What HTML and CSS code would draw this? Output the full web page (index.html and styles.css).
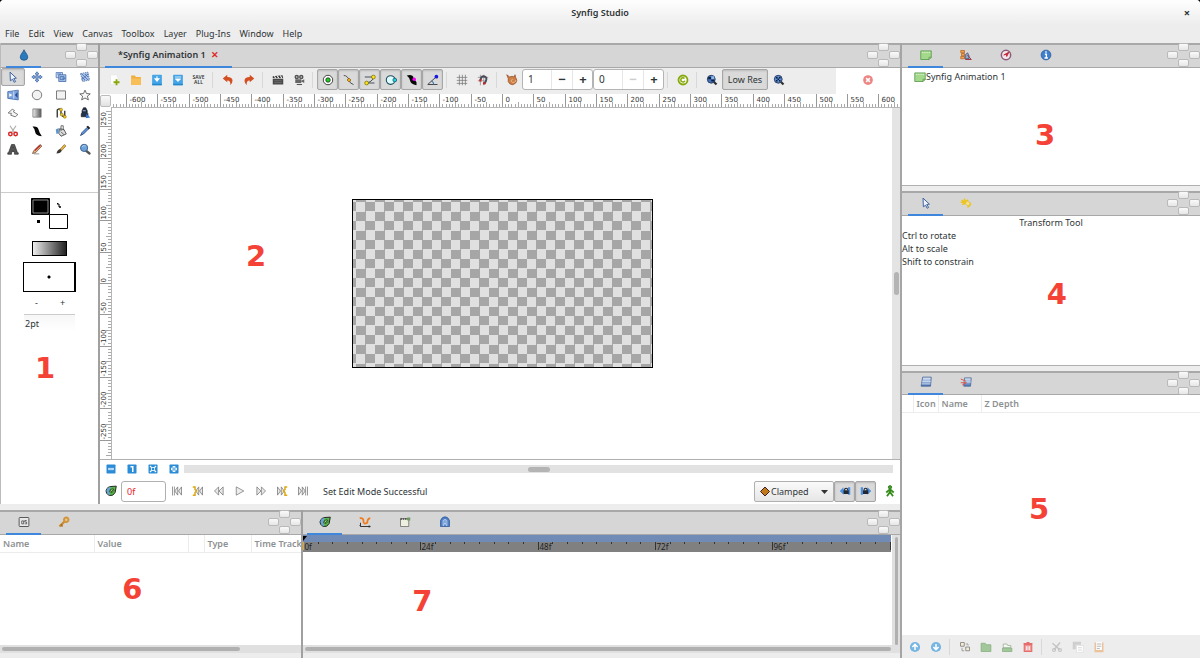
FILE: index.html
```html
<!DOCTYPE html>
<html lang="en">
<head>
<meta charset="utf-8">
<title>Synfig Studio</title>
<link rel="stylesheet" href="styles.css">
</head>
<body>
<svg class="sprite" aria-hidden="true">
  <defs>
    <linearGradient id="lg-fade"><stop offset="0" stop-color="#eee"/><stop offset="1" stop-color="#555"/></linearGradient>
    <linearGradient id="lg-layer" x2="0" y2="1"><stop offset="0" stop-color="#dfeafa"/><stop offset="1" stop-color="#4a74b4"/></linearGradient>
  </defs>
  <symbol id="drop" viewBox="0 0 16 16"><path d="M8 1C9 4 13 7 13 11Q13 15 8 15Q3 15 3 11C3 7 7 4 8 1Z" fill="#2a7ac0" stroke="#1d4f80"/></symbol>
  <symbol id="arrow" viewBox="0 0 16 16"><path d="M4 1.500L12.500 9.500L9 10L11.500 14L9.500 15L7.500 11L4.500 13Z" fill="#eef3fb" stroke="#3b5f9e" stroke-width="1.300"/></symbol>
  <symbol id="move" viewBox="0 0 16 16"><path d="M8 1L10.500 4H9V7H12V5.500L15 8L12 10.500V9H9V12H10.500L8 15L5.500 12H7V9H4V10.500L1 8L4 5.500V7H7V4H5.500Z" fill="#8fb0e0" stroke="#3b65a8"/></symbol>
  <symbol id="scale" viewBox="0 0 16 16"><path d="M1.500 2H10V9H1.500Z" fill="#c3d4f0" stroke="#4b73b5"/><path d="M5 5H14.500V14H5Z" fill="#a9c1e8" stroke="#3b65a8"/><path d="M3 4H8M7 7.500H12V11.500H7ZM9 9.500H14" stroke="#3b65a8" fill="none"/></symbol>
  <symbol id="rotate" viewBox="0 0 16 16"><path d="M2 3.500L12 1.500L14 12L5 14Z" fill="#a9c1e8" stroke="#44699f" stroke-dasharray="2 1"/><path d="M4 4L12 12M4 8L8 12M8 4L12 8M3 12L12 4" stroke="#3b65a8"/></symbol>
  <symbol id="mirror" viewBox="0 0 16 16"><path d="M1 3.500L15 1.500V14.500L1 12.500Z" fill="#7fa3dc" stroke="#3b65a8"/><path d="M9 3V13" stroke="#dfe9f8"/><path d="M3 5.500L7 8L3 10.500Z" fill="#fff"/><path d="M14 4L10.500 8L14 12Z" fill="#244e92"/></symbol>
  <symbol id="circle" viewBox="0 0 16 16"><circle cx="8" cy="8" r="6.300" fill="#f2f2f2" stroke="#555"/></symbol>
  <symbol id="rect" viewBox="0 0 16 16"><path d="M2 2.500H14V13.500H2Z" fill="#f2f2f2" stroke="#555"/></symbol>
  <symbol id="star" viewBox="0 0 16 16"><path d="M8 1.500L10 6L15 6.500L11.200 9.500L12.500 14.500L8 12L3.500 14.500L4.800 9.500L1 6.500L6 6Z" fill="#f6f6f6" stroke="#444"/></symbol>
  <symbol id="poly" viewBox="0 0 16 16"><path d="M1.500 8L7 3L10 4.500L8.500 6.500L14.500 10L11 13L5 11L6 8.500Z" fill="#f6f6f6" stroke="#555"/></symbol>
  <symbol id="grad" viewBox="0 0 16 16"><path d="M2.500 2.500H13.500V13.500H2.500Z" fill="url(#lg-fade)" stroke="#777"/></symbol>
  <symbol id="spline" viewBox="0 0 16 16"><path d="M3 14V4Q6 1 8 4V9Q10 14 13 12V5" fill="none" stroke="#333" stroke-width="1.800"/><g fill="#f2c81e" stroke="#7a6410" stroke-width=".7"><circle cx="8" cy="3.500" r="2"/><circle cx="9" cy="10" r="2"/><circle cx="13" cy="13" r="2"/></g></symbol>
  <symbol id="fill" viewBox="0 0 16 16"><path d="M4 5L6 1H9L11 5V8L12 9V13H3V9L4 8Z" fill="#23314d" stroke="#111" stroke-width=".8"/><path d="M10 9L15 14L9 15Z" fill="#3c77c8"/><path d="M5 5H9" stroke="#cfd8ea"/></symbol>
  <symbol id="cutout" viewBox="0 0 16 16"><path d="M4 1L10 10M12 1L6 10" stroke="#aaa" stroke-width="1.500"/><g fill="none" stroke="#d92626" stroke-width="2"><circle cx="4.500" cy="12" r="2.300"/><circle cx="11.500" cy="12" r="2.300"/></g></symbol>
  <symbol id="width" viewBox="0 0 16 16"><path d="M2 2Q9 1 10 6Q11 10 14 14V15Q6 14 5.500 9Q5 5 2 2Z" fill="#080808"/></symbol>
  <symbol id="bucket" viewBox="0 0 16 16"><path d="M6 5L12 6L15 12L8 15L5 11Z" fill="#ddd" stroke="#333"/><path d="M8 8V1H11V7M8 9L12 13" stroke="#444" fill="none"/><path d="M1 6L5 4L5 11L2 12Z" fill="#5c93c8"/></symbol>
  <symbol id="dropper" viewBox="0 0 16 16"><path d="M2 14L4 10L11 3L13 5L6 12Z" fill="#5d94e0" stroke="#203a6c"/><path d="M10 2L12 1L15 4L13 6Z" fill="#222"/></symbol>
  <symbol id="lettera" viewBox="0 0 16 16"><path d="M6 2H10L14 13H15V15H10V13L9.500 11.500H6.500L6 13V15H1V13H2ZM7 9H9L8 5.500Z" fill="#555" stroke="#222" stroke-width=".8" fill-rule="evenodd"/></symbol>
  <symbol id="pencil" viewBox="0 0 16 16"><path d="M2 14L3.500 10.500L12 2L14.500 4L6 13Z" fill="#e3b27a" stroke="#4d2e1d" stroke-width=".8"/><path d="M5 10L12.500 3" stroke="#b22" stroke-width="1.500"/><path d="M4 14.500H11" stroke="#777"/></symbol>
  <symbol id="brush" viewBox="0 0 16 16"><path d="M7 8L12.500 2L14.500 4L9 10Z" fill="#e7b340" stroke="#7a5a17" stroke-width=".8"/><path d="M2 14Q3 9 7 8L9 10Q8 14 2 14Z" fill="#3d3833"/></symbol>
  <symbol id="zoom" viewBox="0 0 16 16"><path d="M9 10L14 14" stroke="#555" stroke-width="3" stroke-linecap="round"/><circle cx="6.800" cy="6.500" r="4.800" fill="#6ba3dd" stroke="#40618b" stroke-width="1.300"/><path d="M4 5Q6 2.500 9 4" stroke="#cfe4fa" fill="none"/></symbol>
  <symbol id="new" viewBox="0 0 16 16"><path d="M2 1H10L12 4V14H2Z" fill="#fdfdfd" stroke="#e6e6e6"/><path d="M10 7V15M6 11H14" stroke="#86a80a" stroke-width="2.400"/></symbol>
  <symbol id="open" viewBox="0 0 16 16"><path d="M1.500 2H6.500L8 4H14.500V14.500H1.500Z" fill="#f0ae3a"/><path d="M1.500 6H14.500V14.500H1.500Z" fill="#f8bf58"/></symbol>
  <symbol id="save" viewBox="0 0 16 16"><rect x="1.500" y="1" width="13" height="14" rx="1" fill="#45a5e6"/><path d="M8 3V8M5.500 6.500L8 9.500L10.500 6.500Z" fill="#fff" stroke="#fff" stroke-width="1.500"/><path d="M1.500 14H14.500" stroke="#2587cc" stroke-width="2"/></symbol>
  <symbol id="saveas" viewBox="0 0 16 16"><rect x="1.500" y="1" width="13" height="14" rx="1" fill="#45a5e6"/><path d="M4 4H12M4.500 6.500H11.500L8 10Z" fill="#fff" stroke="#fff"/><path d="M1.500 14H14.500" stroke="#2587cc" stroke-width="2"/></symbol>
  <symbol id="undo" viewBox="0 0 16 16"><path d="M1 6L7 1V4Q14 4 14 9Q14 12 11 15Q12 8.500 7 8.500V11Z" fill="#d34f22"/></symbol>
  <symbol id="redo" viewBox="0 0 16 16"><path d="M15 6L9 1V4Q2 4 2 9Q2 12 5 15Q4 8.500 9 8.500V11Z" fill="#d34f22"/></symbol>
  <symbol id="clap" viewBox="0 0 16 16"><path d="M1 6.500H15V14H1Z" fill="#484848"/><path d="M1 3L14 1.500L15 5.500H1Z" fill="#383838"/><path d="M3 3L5 5.500M7 2.500L9 5.500M11 2L13 5.500" stroke="#eee" stroke-width="1.400"/><path d="M3 9H13M3 11.500H13" stroke="#777"/></symbol>
  <symbol id="camera" viewBox="0 0 16 16"><circle cx="5" cy="4" r="3" fill="#555"/><circle cx="11" cy="4" r="3" fill="#555"/><circle cx="5" cy="4" r="1" fill="#ddd"/><circle cx="11" cy="4" r="1" fill="#ddd"/><path d="M3 7H11V12H3ZM11 9L15 7V12L11 10Z" fill="#666"/><path d="M5 14H12" stroke="#555" stroke-width="1.500"/></symbol>
  <symbol id="hpos" viewBox="0 0 16 16"><circle cx="8" cy="8" r="6.300" fill="#fff" stroke="#333" stroke-width="1.200"/><circle cx="8" cy="8" r="3" fill="#1fd01f" stroke="#222"/></symbol>
  <symbol id="hvert" viewBox="0 0 16 16"><path d="M1 2Q6 2 8 8Q9 13 14 14" stroke="#444" stroke-width="1.200" fill="none"/><path d="M8 5.500L10.500 8L8 10.500L5.500 8Z" fill="#f5b916" stroke="#7c4c08"/></symbol>
  <symbol id="htan" viewBox="0 0 16 16"><path d="M1 4H12M3 12Q8 12 13 6M3 12H14" stroke="#345" stroke-width="1.200" fill="none"/><g fill="#fbe512" stroke="#7a6d00"><circle cx="12.500" cy="4" r="2.500"/><circle cx="3.500" cy="12" r="2.500"/></g></symbol>
  <symbol id="hrad" viewBox="0 0 16 16"><circle cx="7.500" cy="8" r="5.800" fill="#dff" stroke="#1d4b5c" stroke-width="1.400"/><circle cx="13" cy="8" r="2.500" fill="#18d8e8" stroke="#1d4b5c"/></symbol>
  <symbol id="hwidth" viewBox="0 0 16 16"><path d="M1 2Q9 0 10 5L14 11V15Q6 13 5.500 9Q5 5 1 2Z" fill="#080808"/><circle cx="11" cy="7" r="2.300" fill="#f0f"/></symbol>
  <symbol id="hang" viewBox="0 0 16 16"><path d="M1 14H14M1 14L12 4" stroke="#444" stroke-width="1.300"/><path d="M6 9Q9 11 9 14" stroke="#47a" fill="none" stroke-width="1.500"/><circle cx="12.500" cy="3.500" r="2.500" fill="#1717e0"/></symbol>
  <symbol id="grid" viewBox="0 0 16 16"><path d="M4.500 1V15M8.500 1V15M12.500 1V15M1 4.500H15M1 8.500H15M1 12.500H15" stroke="#777"/></symbol>
  <symbol id="snap" viewBox="0 0 16 16"><path d="M4.500 1V15M9 1V15M1 4.500H15M1 9H10" stroke="#888"/><path d="M5 8Q5 3 9 3Q14 4 12 9L10 13" fill="none" stroke="#4b4f5c" stroke-width="2.600"/><path d="M3 7H6V10H3ZM8 11H11V14H8Z" fill="#c22"/></symbol>
  <symbol id="onion" viewBox="0 0 16 16"><path d="M1 1L5 4Q8 2 11 4L12 1L13 5Q16 8 13 12Q9 16 5 13Q2 11 3 6Z" fill="#cd7f45" stroke="#96502a"/><path d="M9 7Q6 8 7 10T11 11T13 8" stroke="#f0c7a0" fill="none"/></symbol>
  <symbol id="refresh" viewBox="0 0 16 16"><circle cx="8" cy="8" r="6" fill="#fff" stroke="#86a80a" stroke-width="2.400"/><path d="M10 6A2.800 2.800 0 1 0 10.500 9" fill="none" stroke="#86a80a" stroke-width="2"/></symbol>
  <symbol id="zin" viewBox="0 0 16 16"><path d="M10 10L14 14" stroke="#333" stroke-width="3"/><circle cx="7" cy="7" r="5.200" fill="#4275bd" stroke="#2b3e5f" stroke-width="1.300"/><path d="M3 4H7V7H3ZM7 7H11V10H7Z" fill="#0c1f42"/><path d="M7 3H11V7H7Z" fill="#8db8ee"/></symbol>
  <symbol id="zchk" viewBox="0 0 16 16"><path d="M10 10L14 14" stroke="#333" stroke-width="3"/><circle cx="7" cy="7" r="5.200" fill="#5b8bd0" stroke="#2b3e5f" stroke-width="1.300"/><path d="M4 4H6V6H4ZM8 4H10V6H8ZM6 6H8V8H6ZM4 8H6V10H4ZM8 8H10V10H8Z" fill="#0c1f42"/></symbol>
  <symbol id="stop" viewBox="0 0 16 16"><circle cx="8" cy="8" r="6.500" fill="#ed8585"/><path d="M5.500 5.500L10.500 10.500M10.500 5.500L5.500 10.500" stroke="#fff" stroke-width="2"/></symbol>
  <symbol id="canvas" viewBox="0 0 16 16"><path d="M1 2.500H15V11L12 14H1Z" fill="#a4d88b" stroke="#4f9440"/><path d="M2.500 4.500H14" stroke="#eefae8" stroke-dasharray="2 1"/><path d="M15 11H12V14Z" fill="#e9f8e2" stroke="#4f9440"/></symbol>
  <symbol id="history" viewBox="0 0 16 16"><path d="M1 2H6V5H1ZM2 6H6V9H2ZM1 10H6V13H1Z" fill="#f3a44b" stroke="#b9601c"/><path d="M7 13V8L10 5L12 9V13Z" fill="#8fa9d0" stroke="#2d4878"/><path d="M10 8L15 14M7 14H15" stroke="#a3333f" stroke-width="1.300"/></symbol>
  <symbol id="compass" viewBox="0 0 16 16"><circle cx="8" cy="8" r="6.200" fill="#f3e6ec" stroke="#8d5b79" stroke-width="2"/><path d="M12 4L9 10L8 7L5 8Z" fill="#e0242f" stroke="#b31b2b"/></symbol>
  <symbol id="info" viewBox="0 0 16 16"><circle cx="8" cy="8" r="6.500" fill="#3d7fce" stroke="#255a9e"/><path d="M8 3V5M6.500 7H8.500V12M6 12H10.500" stroke="#fff" stroke-width="1.800" fill="none"/></symbol>
  <symbol id="tooldef" viewBox="0 0 16 16"><path d="M2 4L6 7H1M6 2V6L11 4M3 10L8 8Q14 6 14 10L10 14" stroke="#edc51c" stroke-width="2" fill="none"/><path d="M9 5L14 8L11 12L7 9Z" fill="#f7e28b" stroke="#dfbe2c"/></symbol>
  <symbol id="layers" viewBox="0 0 16 16"><path d="M3.500 1.500H15L14 13.500H1.500Z" fill="url(#lg-layer)" stroke="#3b5c8f"/><path d="M2.500 7.500H14.500M2 10.500H14" stroke="#dce8f8"/></symbol>
  <symbol id="groups" viewBox="0 0 16 16"><path d="M6 2.500H15L14 13.500H5Z" fill="url(#lg-layer)" stroke="#44618f"/><path d="M6 8H14.500" stroke="#dce8f8"/><path d="M1 4L8 7M1 9H9M3 12L8 9" stroke="#d8564a" stroke-width="1.300"/></symbol>
  <symbol id="bminus" viewBox="0 0 16 16"><rect x="2" y="2" width="12" height="12" rx="1" fill="#2a8bd6"/><path d="M4.500 8H11.500" stroke="#fff" stroke-width="3"/><path d="M5.500 8H10.500" stroke="#2a8bd6"/></symbol>
  <symbol id="bone" viewBox="0 0 16 16"><rect x="2" y="2" width="12" height="12" rx="1" fill="#2a8bd6"/><path d="M6 5H9V12" stroke="#fff" stroke-width="2" fill="none"/></symbol>
  <symbol id="bfit" viewBox="0 0 16 16"><rect x="2" y="2" width="12" height="12" rx="1" fill="#2a8bd6"/><path d="M4 4L12 12M12 4L4 12" stroke="#fff" stroke-width="1.500"/><path d="M6 6H10V10H6Z" fill="#2a8bd6" stroke="#fff"/></symbol>
  <symbol id="bplus" viewBox="0 0 16 16"><rect x="2" y="2" width="12" height="12" rx="1" fill="#2a8bd6"/><path d="M8 4V12M4 8H12" stroke="#fff" stroke-width="3.500"/><path d="M8 5V11M5 8H11" stroke="#2a8bd6"/></symbol>
  <symbol id="time" viewBox="0 0 16 16"><path d="M15 1.500L13.500 10Q11 15 6 14Q1 12 1.500 7Q3 2 8 2Z" fill="#59b845" stroke="#222" stroke-width="1.300"/><path d="M8 2.700Q2 3 2.200 8Q3 13 7 13.500Q4 8 8 2.700Z" fill="#6a9fe4"/><path d="M11 5Q6 5 6 9Q10 12 12 7Z" fill="#8fdc78" stroke="#1c3a15"/><path d="M7 7L9 9L11 6" stroke="#1c3a15" fill="none"/></symbol>
  <symbol id="pbegin" viewBox="0 0 16 16"><path d="M2 2V14M4.500 2V14M9 2.500L5 8L9 13.500ZM14 2.500L10 8L14 13.500Z" fill="#e8e8e8" stroke="#777"/></symbol>
  <symbol id="pkprev" viewBox="0 0 16 16"><path d="M9 2.500L5 8L9 13.500ZM14 2.500L10 8L14 13.500Z" fill="#e8e8e8" stroke="#777"/><path d="M1 2.500H4V6L6 8L4 10V13.500H1" fill="none" stroke="#dca814" stroke-width="2"/></symbol>
  <symbol id="pprev" viewBox="0 0 16 16"><path d="M7.500 2.500L2 8L7.500 13.500ZM13.500 2.500L8 8L13.500 13.500Z" fill="#e8e8e8" stroke="#777"/></symbol>
  <symbol id="play" viewBox="0 0 16 16"><path d="M3 2.500L13 8L3 13.500Z" fill="#eee" stroke="#777"/></symbol>
  <symbol id="pnext" viewBox="0 0 16 16"><path d="M2.500 2.500L8 8L2.500 13.500ZM8.500 2.500L14 8L8.500 13.500Z" fill="#e8e8e8" stroke="#777"/></symbol>
  <symbol id="pknext" viewBox="0 0 16 16"><path d="M2 2.500L6 8L2 13.500ZM7 2.500L11 8L7 13.500Z" fill="#e8e8e8" stroke="#777"/><path d="M15 2.500H12V6L10 8L12 10V13.500H15" fill="none" stroke="#dca814" stroke-width="2"/></symbol>
  <symbol id="pend" viewBox="0 0 16 16"><path d="M14 2V14M11.500 2V14M2 2.500L6 8L2 13.500ZM7 2.500L11 8L7 13.500Z" fill="#e8e8e8" stroke="#777"/></symbol>
  <symbol id="lockl" viewBox="0 0 16 16"><path d="M1 8L6 3V6H8V10H6V13ZM12 3H15V13H12Z" fill="#4b8fe0"/><path d="M6 7H13V12H6Z" fill="#23282f"/><path d="M7.500 7V5.500Q9.500 3 11.500 5.500V7" stroke="#23282f" stroke-width="1.400" fill="none"/></symbol>
  <symbol id="lockr" viewBox="0 0 16 16"><path d="M15 8L10 3V6H8V10H10V13ZM1 3H4V13H1Z" fill="#4b8fe0"/><path d="M4 7H11V12H4Z" fill="#23282f"/><path d="M5.500 7V5.500Q7.500 3 9.500 5.500V7" stroke="#23282f" stroke-width="1.400" fill="none"/></symbol>
  <symbol id="man" viewBox="0 0 16 16"><circle cx="8" cy="3" r="2.200" fill="#43a324" stroke="#236a0e"/><path d="M8 5V10M3 10L7 6.500H9L13 10M4 15L7.500 10H8.500L12 15" fill="none" stroke="#348c19" stroke-width="2.400"/></symbol>
  <symbol id="params" viewBox="0 0 16 16"><rect x="1.500" y="2" width="13" height="12" rx="1" fill="#e8e8e8" stroke="#555" stroke-width="1.300"/><path d="M5 6.500H7.500V10.500H5ZM11.500 6H9V8H11.500V10.500H9" stroke="#444" fill="none"/></symbol>
  <symbol id="key" viewBox="0 0 16 16"><path d="M2 14L9 7" stroke="#c98a32" stroke-width="3"/><path d="M4 11L6 14" stroke="#ad6c17" stroke-width="2"/><circle cx="11" cy="5" r="3" fill="#e8c88e" stroke="#d2953b" stroke-width="2.600"/></symbol>
  <symbol id="curves" viewBox="0 0 16 16"><path d="M2 9V14H15M2 14L1 12M13 13L15 14L13 15" stroke="#333" stroke-width="1.300" fill="none"/><path d="M1 3Q6 2 6 7T11 9Q11 3 15 3" fill="none" stroke="#ee7a1d" stroke-width="2.400"/></symbol>
  <symbol id="keyframe" viewBox="0 0 16 16"><path d="M2 3.500H13V14H2Z" fill="#efefdf" stroke="#666"/><path d="M2 4H13" stroke="#444" stroke-width="2" stroke-dasharray="2 1"/><path d="M11 2H15V6H11Z" fill="#6b9b5e"/></symbol>
  <symbol id="sound" viewBox="0 0 16 16"><path d="M2 14V6Q4 1 8 1Q12 1 14 6V14Z" fill="#4f80c6" stroke="#2f5795"/><path d="M5.500 13V6Q8 3 10.500 6V13M8 5V9L6 13M8 9L10 13" stroke="#d7e5f8" fill="none"/></symbol>
  <symbol id="up" viewBox="0 0 16 16"><circle cx="8" cy="8" r="6.800" fill="#77b5e2"/><path d="M8 12V5M4.500 8L8 4.500L11.500 8" stroke="#fff" stroke-width="2" fill="none"/></symbol>
  <symbol id="down" viewBox="0 0 16 16"><circle cx="8" cy="8" r="6.800" fill="#77b5e2"/><path d="M8 4V11M4.500 8L8 11.500L11.500 8" stroke="#fff" stroke-width="2" fill="none"/></symbol>
  <symbol id="dup" viewBox="0 0 16 16"><path d="M2 2H7V7H2ZM9 8H14V13H9Z" fill="#f4ecd0" stroke="#888" stroke-width="1.200"/><path d="M4 9V13H7M9 4H12V6" stroke="#888" fill="none"/></symbol>
  <symbol id="group" viewBox="0 0 16 16"><path d="M1.500 3H7L8 5H14.500V14H1.500Z" fill="#a2c79b" stroke="#84ae7d"/></symbol>
  <symbol id="ungroup" viewBox="0 0 16 16"><path d="M3 4H8L9 6H13V9H3Z" fill="#f3f6f1" stroke="#96ac90"/><path d="M2 9.500H14.500V14H2Z" fill="#a2c79b" stroke="#84ae7d"/></symbol>
  <symbol id="trash" viewBox="0 0 16 16"><path d="M2 3.500H14M6 2H10M3 5H13V14H3Z" fill="#f29b9b" stroke="#e56c6c" stroke-width="1.500"/><path d="M6 7V12M8 7V12M10 7V12" stroke="#fff"/></symbol>
  <symbol id="cut" viewBox="0 0 16 16"><path d="M2 3L12 12M12 2L4 12" stroke="#c4c4c4" stroke-width="2"/><circle cx="4" cy="12" r="2" fill="none" stroke="#c4c4c4" stroke-width="1.500"/><circle cx="12" cy="12" r="2" fill="none" stroke="#c4c4c4" stroke-width="1.500"/></symbol>
  <symbol id="copy" viewBox="0 0 16 16"><path d="M1 1H12V5H5V11H1Z" fill="#cfcfcf"/><path d="M6 6H15V15H6Z" fill="#fff" stroke="#ddd"/><path d="M8 9H13M8 12H13" stroke="#ccc"/></symbol>
  <symbol id="paste" viewBox="0 0 16 16"><path d="M2 2H14V15H2Z" fill="#ecc29a"/><path d="M4 1H12V12H4Z" fill="#fafafa"/><path d="M5 4H11M5 7H11M5 10H9" stroke="#aaa"/></symbol>
</svg>

<div class="window">
  <header class="titlebar"><h1>Synfig Studio</h1><button class="close" aria-label="Close">×</button></header>
  <nav class="menubar">
    <button>File</button><button>Edit</button><button>View</button><button>Canvas</button><button>Toolbox</button><button>Layer</button><button>Plug-Ins</button><button>Window</button><button>Help</button>
  </nav>
  <main class="workspace">
    <div class="left">
      <div class="upper">
        <section class="dock toolbox" aria-label="Toolbox">
          <div class="tabs"><button class="tab active" aria-label="Tools"><svg><use href="#drop"/></svg></button><span class="mover"><i></i><i></i><i></i><i></i></span></div>
          <div class="tools">
            <button class="on" aria-label="Transform"><svg><use href="#arrow"/></svg></button><button aria-label="Smooth move"><svg><use href="#move"/></svg></button><button aria-label="Scale"><svg><use href="#scale"/></svg></button><button aria-label="Rotate"><svg><use href="#rotate"/></svg></button>
            <button aria-label="Mirror"><svg><use href="#mirror"/></svg></button><button aria-label="Circle"><svg><use href="#circle"/></svg></button><button aria-label="Rectangle"><svg><use href="#rect"/></svg></button><button aria-label="Star"><svg><use href="#star"/></svg></button>
            <button aria-label="Polygon"><svg><use href="#poly"/></svg></button><button aria-label="Gradient"><svg><use href="#grad"/></svg></button><button aria-label="Spline"><svg><use href="#spline"/></svg></button><button aria-label="Fill"><svg><use href="#fill"/></svg></button>
            <button aria-label="Cutout"><svg><use href="#cutout"/></svg></button><button aria-label="Width"><svg><use href="#width"/></svg></button><button aria-label="Paint bucket"><svg><use href="#bucket"/></svg></button><button aria-label="Eyedrop"><svg><use href="#dropper"/></svg></button>
            <button aria-label="Text"><svg><use href="#lettera"/></svg></button><button aria-label="Sketch"><svg><use href="#pencil"/></svg></button><button aria-label="Brush"><svg><use href="#brush"/></svg></button><button aria-label="Zoom"><svg><use href="#zoom"/></svg></button>
          </div>
          <div class="defaults">
            <button class="swatches" aria-label="Outline and fill colours">
              <svg viewBox="0 0 38 32"><path d="M.5 .5H18.500V16.500H.5Z" fill="#000" stroke="#000"/><path d="M2 2H17V15H2Z" fill="none" stroke="#888"/><path d="M18.500 16.500H36.500V30.500H18.500Z" fill="#fff" stroke="#000"/><path d="M6 22H9V25H6Z" fill="#000"/><path d="M26 6H28V9H30M26 6L27 5M29 8V10" fill="none" stroke="#000"/></svg>
            </button>
            <button class="gradient" aria-label="Default gradient"></button>
            <button class="brushsize" aria-label="Brush preview"></button>
            <div class="pm"><button>-</button><button>+</button></div>
            <input class="pt" type="text" value="2pt" aria-label="Brush size">
          </div>
          <b class="mark m1">1</b>
        </section>

        <section class="dock work" aria-label="Canvas">
          <div class="tabs"><button class="tab active wide">*Synfig Animation 1 <span class="x">✕</span></button><span class="mover"><i></i><i></i><i></i><i></i></span></div>
          <div class="toolrow">
            <div class="toolbar">
              <button aria-label="New"><svg><use href="#new"/></svg></button><button aria-label="Open"><svg><use href="#open"/></svg></button><button aria-label="Save"><svg><use href="#save"/></svg></button><button aria-label="Save as"><svg><use href="#saveas"/></svg></button><button class="saveall">SAVE<br>ALL</button><hr>
              <button aria-label="Undo"><svg><use href="#undo"/></svg></button><button aria-label="Redo"><svg><use href="#redo"/></svg></button><hr>
              <button aria-label="Render"><svg><use href="#clap"/></svg></button><button aria-label="Preview"><svg><use href="#camera"/></svg></button><hr>
              <button class="on" aria-label="Position handles"><svg><use href="#hpos"/></svg></button><button class="on" aria-label="Vertex handles"><svg><use href="#hvert"/></svg></button><button class="on" aria-label="Tangent handles"><svg><use href="#htan"/></svg></button><button class="on" aria-label="Radius handles"><svg><use href="#hrad"/></svg></button><button class="on" aria-label="Width handles"><svg><use href="#hwidth"/></svg></button><button class="on" aria-label="Angle handles"><svg><use href="#hang"/></svg></button><hr>
              <button aria-label="Show grid"><svg><use href="#grid"/></svg></button><button aria-label="Snap to grid"><svg><use href="#snap"/></svg></button><hr>
              <button aria-label="Onion skin"><svg><use href="#onion"/></svg></button>
              <span class="spin"><input type="text" value="1" aria-label="Past frames"><button>−</button><button>+</button></span><span class="spin"><input type="text" value="0" aria-label="Future frames"><button disabled>−</button><button>+</button></span><hr>
              <button aria-label="Refresh"><svg><use href="#refresh"/></svg></button><hr>
              <button aria-label="Decrease resolution"><svg><use href="#zin"/></svg></button><button class="on lowres">Low Res</button><button aria-label="Increase resolution"><svg><use href="#zchk"/></svg></button>
            </div>
            <div class="halt"><button aria-label="Stop"><svg><use href="#stop"/></svg></button></div>
          </div>
          <div class="stage">
            <button class="corner" aria-label="Canvas menu"></button>
            <div class="ruler horizontal"></div>
            <div class="ruler vertical"></div>
            <div class="view"><div class="artboard"></div></div>
            <div class="vscroll"><i></i></div>
          </div>
          <div class="zoomrow">
            <button aria-label="Zoom out"><svg><use href="#bminus"/></svg></button><button aria-label="Zoom 100%"><svg><use href="#bone"/></svg></button><button aria-label="Zoom to fit"><svg><use href="#bfit"/></svg></button><button aria-label="Zoom in"><svg><use href="#bplus"/></svg></button>
            <div class="hscroll"><i></i></div>
          </div>
          <div class="playrow">
            <button aria-label="Time"><svg><use href="#time"/></svg></button><input class="frame" type="text" value="0f" aria-label="Current frame">
            <button aria-label="Begin"><svg><use href="#pbegin"/></svg></button><button aria-label="Previous keyframe"><svg><use href="#pkprev"/></svg></button><button aria-label="Previous frame"><svg><use href="#pprev"/></svg></button><button aria-label="Play"><svg><use href="#play"/></svg></button><button aria-label="Next frame"><svg><use href="#pnext"/></svg></button><button aria-label="Next keyframe"><svg><use href="#pknext"/></svg></button><button aria-label="End"><svg><use href="#pend"/></svg></button>
            <output class="status">Set Edit Mode Successful</output>
            <select class="interp" aria-label="Interpolation"><option>Clamped</option></select>
            <button class="on" aria-label="Lock past keyframes"><svg><use href="#lockl"/></svg></button><button class="on" aria-label="Lock future keyframes"><svg><use href="#lockr"/></svg></button><button class="animate" aria-label="Animate mode"><svg><use href="#man"/></svg></button>
          </div>
          <b class="mark m2">2</b>
        </section>
      </div>

      <div class="lower">
        <section class="dock params" aria-label="Parameters">
          <div class="tabs"><button class="tab active" aria-label="Parameters"><svg><use href="#params"/></svg></button><button class="tab" aria-label="Keyframes"><svg><use href="#key"/></svg></button><span class="mover"><i></i><i></i><i></i><i></i></span></div>
          <table class="cols"><thead><tr><th class="c-name">Name</th><th class="c-value">Value</th><th class="c-gap"></th><th class="c-type">Type</th><th>Time Track</th></tr></thead></table>
          <div class="grow"></div>
          <div class="hbar"><i></i></div>
          <b class="mark m6">6</b>
        </section>
        <section class="dock timetrack" aria-label="Time track">
          <div class="tabs"><button class="tab active" aria-label="Time track"><svg><use href="#time"/></svg></button><button class="tab" aria-label="Curves"><svg><use href="#curves"/></svg></button><button class="tab" aria-label="Keyframe list"><svg><use href="#keyframe"/></svg></button><button class="tab" aria-label="Sound"><svg><use href="#sound"/></svg></button><span class="mover"><i></i><i></i><i></i><i></i></span></div>
          <div class="track"><div class="timeline"></div><div class="vbar"><i></i></div></div>
          <div class="hbar full"><i></i></div>
          <b class="mark m7">7</b>
        </section>
      </div>
    </div>

    <div class="right">
      <section class="dock" aria-label="Canvas browser">
        <div class="tabs"><button class="tab active" aria-label="Canvases"><svg><use href="#canvas"/></svg></button><button class="tab" aria-label="History"><svg><use href="#history"/></svg></button><button class="tab" aria-label="Navigator"><svg><use href="#compass"/></svg></button><button class="tab" aria-label="Info"><svg><use href="#info"/></svg></button><span class="mover"><i></i><i></i><i></i><i></i></span></div>
        <div class="body"><button class="entry"><svg><use href="#canvas"/></svg>Synfig Animation 1</button></div>
        <b class="mark m3">3</b>
      </section>
      <section class="dock" aria-label="Tool options">
        <div class="tabs"><button class="tab active" aria-label="Tool options"><svg><use href="#arrow"/></svg></button><button class="tab" aria-label="Tool defaults"><svg><use href="#tooldef"/></svg></button><span class="mover"><i></i><i></i><i></i><i></i></span></div>
        <div class="body options"><h2>Transform Tool</h2><p>Ctrl to rotate</p><p>Alt to scale</p><p>Shift to constrain</p></div>
        <b class="mark m4">4</b>
      </section>
      <section class="dock last" aria-label="Layers">
        <div class="tabs"><button class="tab active" aria-label="Layers"><svg><use href="#layers"/></svg></button><button class="tab" aria-label="Groups"><svg><use href="#groups"/></svg></button><span class="mover"><i></i><i></i><i></i><i></i></span></div>
        <table class="cols layercols"><thead><tr><th class="c-vis"></th><th class="c-icon">Icon</th><th class="c-lname">Name</th><th>Z Depth</th></tr></thead></table>
        <div class="grow"></div>
        <div class="layerbar"><button aria-label="Raise"><svg><use href="#up"/></svg></button><button aria-label="Lower"><svg><use href="#down"/></svg></button><hr><button aria-label="Duplicate"><svg><use href="#dup"/></svg></button><button aria-label="Group"><svg><use href="#group"/></svg></button><button aria-label="Ungroup"><svg><use href="#ungroup"/></svg></button><button aria-label="Delete"><svg><use href="#trash"/></svg></button><hr><button aria-label="Cut"><svg><use href="#cut"/></svg></button><button aria-label="Copy"><svg><use href="#copy"/></svg></button><button aria-label="Paste"><svg><use href="#paste"/></svg></button></div>
        <b class="mark m5">5</b>
      </section>
    </div>
  </main>
</div>
<script src="script.js"></script>
</body>
</html>
```
FILE: styles.css
```css
* { box-sizing: border-box; }
body { margin: 0; background: #000; color: #2e3436; font: 9px/13px "Noto Sans", "Open Sans", sans-serif; }
button, input, select { font: inherit; color: inherit; margin: 0; padding: 0; border: 0; background: none; border-radius: 0; }
button { display: inline-flex; align-items: center; justify-content: center; }
svg { display: block; width: 12px; height: 12px; flex: none; }
h1, h2, p { margin: 0; font-size: inherit; }
.sprite { position: absolute; width: 0; height: 0; }

.window { height: 100vh; display: flex; flex-direction: column; background: #ededed; border-radius: 4px 4px 0 0; overflow: hidden; }
.titlebar { height: 25px; flex: none; display: grid; grid-template-columns: 1fr auto 1fr; align-items: center; background: linear-gradient(#fefefe, #ededed); }
.titlebar h1 { grid-column: 2; font-weight: 600; }
.close { justify-self: end; width: 26px; height: 20px; font-weight: 700; font-size: 11px; }
.menubar { height: 18px; flex: none; display: flex; align-items: center; gap: 9px; padding: 0 0 2px 5px; }

.workspace { flex: 1; min-height: 0; display: grid; grid-template-columns: minmax(0, 3fr) minmax(0, 1fr); }
.left { display: grid; grid-template-rows: minmax(0, 467fr) minmax(0, 148fr); min-height: 0; }
.right { display: grid; grid-template-rows: minmax(0, 148fr) minmax(0, 180fr) minmax(0, 287fr); min-height: 0; border-left: 2px solid #a5a5a5; }
.upper { display: grid; grid-template-columns: 98px minmax(0, 1fr); min-height: 0; padding-bottom: 6px; }
.lower { display: grid; grid-template-columns: minmax(0, 301fr) minmax(0, 599fr); min-height: 0; }

.dock { position: relative; display: flex; flex-direction: column; min-width: 0; min-height: 0; background: #fff; }
.right .dock { border-bottom: 1px solid #b0b0b0; margin-bottom: 5px; }
.right .dock.last { border: 0; margin: 0; }
.tabs { height: 25px; flex: none; display: flex; padding-left: 5px; background: #d6d6d6; border-top: 2px solid #a8a8a8; border-bottom: 1px solid #a8a8a8; }
.right .tabs, .params .tabs { padding-left: 6px; }
.right .last .tabs { height: 24px; }
.tab { width: 35px; margin-right: 5px; padding-bottom: 2px; border-bottom: 2px solid transparent; margin-bottom: -1px; }
.tab.active { border-bottom-color: #3f87dc; }
.tab.wide { width: auto; padding: 0 13px 2px; font-weight: 600; white-space: nowrap; }
.tab .x { margin-left: 5px; color: #e02828; }
.mover { flex: none; margin: -2px 0 -1px auto; display: grid; grid-template: repeat(3, 8px) / repeat(3, 11px); }
.mover i { background: linear-gradient(#fafafa, #e6e6e6); border: 1px solid #b9b9b9; border-radius: 2px; }
.mover i:nth-child(1) { grid-area: 1 / 2; }
.mover i:nth-child(2) { grid-area: 2 / 1; }
.mover i:nth-child(3) { grid-area: 2 / 3; }
.mover i:nth-child(4) { grid-area: 3 / 2; }
.on { background: #dadada; border: 1px solid #a6a6a6; border-radius: 2px; box-shadow: inset 0 1px 2px #bbb; }
.grow { flex: 1; }
.mark { position: absolute; transform: translate(-50%, -50%); color: #f44336; font: bold 29px/30px "DejaVu Sans", sans-serif; }

.toolbox { border-left: 1px solid #bbb; }
.toolbox .tab { margin-right: 0; }
.tools { display: grid; grid-template-columns: repeat(4, 24px); grid-auto-rows: 18px; height: 125px; flex: none; border-bottom: 1px solid #ccc; }
.defaults { display: flex; flex-direction: column; align-items: center; padding-top: 5px; }
.swatches, .swatches svg { width: 38px; height: 32px; }
.gradient { width: 35px; height: 15px; margin-top: 11px; border: 1px solid #000; background: linear-gradient(90deg, #eee, #222); }
.brushsize { width: 53px; height: 30px; margin-top: 6px; border: 1px solid #000; border-right-width: 2px; background: radial-gradient(circle, #000 1px, #fff 2px); }
.pm { width: 52px; height: 22px; padding-bottom: 2px; display: flex; }
.pm button { flex: 1; }
.pt { width: 51px; height: 17px; border-top: 1px solid #ccc; padding-left: 1px; background: linear-gradient(#f7f7f7, #fff); }

.work { border-left: 2px solid #a0a0a0; }
.toolrow { display: flex; height: 26px; flex: none; }
.toolbar { display: flex; align-items: center; flex: 1; background: #ededed; padding: 0 0 3px 4px; }
.toolbar button, .layerbar button, .playrow button { width: 21px; height: 21px; flex: none; }
hr { width: 1px; height: 16px; flex: none; margin: 0 4px 0 3px; border: 0; background: #d8d8d8; }
.toolbar .saveall { font-size: 5px; line-height: 5px; font-weight: 600; }
.spin { display: flex; width: 71px; height: 21px; flex: none; background: #fff; border: 1px solid #b4b4b4; border-radius: 3px; overflow: hidden; }
.spin input { width: 28px; padding-left: 5px; font-size: 10px; }
.toolbar .spin button { width: 21px; height: 19px; border-left: 1px solid #e6e6e6; font-size: 13px; font-weight: 700; }
.spin button:disabled { color: #ccc; }
.toolbar .lowres { width: 46px; }
.halt { width: 64px; flex: none; display: flex; align-items: center; justify-content: center; padding-bottom: 3px; }

.stage { flex: 1; min-height: 0; display: grid; grid-template: 14px minmax(0, 1fr) / 11px minmax(0, 1fr) 8px; border-bottom: 1px solid #b0b0b0; }
.corner { margin: 1px 0; border: 1px solid #bbb; border-radius: 2px; background: linear-gradient(#fafafa, #e2e2e2); }
.horizontal { grid-area: 1 / 2 / 2 / 4; border-bottom: 1px solid #b5b5b5; }
.vertical { grid-area: 2 / 1; }
.view { grid-area: 2 / 2; display: flex; align-items: center; justify-content: center; border-left: 1px solid #b5b5b5; }
.vscroll { grid-area: 2 / 3; background: #e4e4e4; display: flex; align-items: center; justify-content: center; }
.vscroll i { width: 5px; height: 23px; border-radius: 3px; background: #b4b4b4; }
.ruler { overflow: hidden; min-width: 0; min-height: 0; background: #fff; }
.ruler svg, .timeline svg { width: 100%; height: 100%; }
.ruler text { font: 7px "DejaVu Sans", sans-serif; fill: #333; }
.artboard { width: 301px; height: 169px; border: 1px solid #000; background: repeating-conic-gradient(#a6a6a6 0 25%, #e0e0e0 0 50%) 3px 2px / 19px 19px; }

.zoomrow { display: flex; height: 18px; flex: none; align-items: center; padding-right: 7px; }
.zoomrow button { width: 21px; height: 18px; }
.hscroll { flex: 1; height: 8px; background: #e2e2e2; display: flex; align-items: center; justify-content: center; }
.hscroll i { width: 22px; height: 5px; border-radius: 3px; background: #b4b4b4; }
.playrow { display: flex; height: 26px; flex: none; align-items: center; }
.playrow .frame { width: 45px; height: 21px; border: 1px solid #b0b0b0; border-radius: 3px; padding-left: 5px; color: #e8222a; background: #fff; }
.status { margin: 0 auto 0 10px; white-space: nowrap; }
.interp { appearance: none; width: 80px; height: 21px; padding-left: 16px; border: 1px solid #b0b0b0; border-radius: 2px; background: url("data:image/svg+xml,%3Csvg xmlns='http://www.w3.org/2000/svg' width='78' height='19'%3E%3Cpath d='M10 5L14.500 9.500L10 14L5.500 9.500Z' fill='%23c07818' stroke='%23422'/%3E%3Cpath d='M66 8H73L69.500 12Z' fill='%23333'/%3E%3C/svg%3E") no-repeat, linear-gradient(#fafafa, #e6e6e6); }
.playrow .animate { margin: 0 0 0 3px; }

.cols { border-collapse: collapse; table-layout: fixed; width: 100%; flex: none; color: #8e9192; }
.cols th { height: 17px; padding: 0 0 0 3px; text-align: left; font-weight: 600; white-space: nowrap; overflow: hidden; border-right: 1px solid #ececec; border-bottom: 1px solid #ececec; }
.cols th:last-child { border-right: 0; }
.c-name { width: 94px; }
.c-value { width: 94px; }
.c-gap { width: 16px; }
.c-type { width: 47px; }
.c-vis { width: 11px; }
.c-icon { width: 25px; }
.c-lname { width: 43px; }
.hbar { height: 13px; flex: none; padding: 2px 2px 0; background: linear-gradient(#e0e0e0 8px, #ededed 0); }
.hbar i { display: block; width: 80%; height: 4px; border-radius: 2px; background: #b0b0b0; }
.hbar.full { padding-right: 9px; }
.hbar.full i { width: 100%; }
.timetrack { border-left: 2px solid #a0a0a0; }
.timetrack .tabs { padding-left: 4px; }
.track { flex: 1; min-height: 0; display: flex; }
.timeline { flex: 1; min-width: 0; height: 17px; overflow: hidden; background: linear-gradient(#718bb7 7px, #808080 0); }
.timeline text { font-size: 8px; fill: #222; }
.vbar { width: 9px; background: #e0e0e0; padding: 2px 2px 0 3px; border-left: 1px solid #fff; }
.vbar i { display: block; height: 100%; border-radius: 2px; background: #b0b0b0; }

.entry { padding: 2px 0 0 12px; }
.options h2 { font-weight: 400; text-align: center; }
.layerbar { display: flex; align-items: center; height: 23px; flex: none; padding-left: 2px; background: #ededed; }

.m1 { left: 44px; top: 325px; }
.m2 { left: 156px; top: 213px; }
.m3 { left: 48%; top: 92px; }
.m4 { left: 52%; top: 103px; }
.m5 { left: 46%; top: 138px; }
.m6 { left: 44%; top: 79px; }
.m7 { left: 20%; top: 91px; }
```
FILE: script.js
```js
const NS = "http://www.w3.org/2000/svg";

function make(parent, name, attrs, text) {
  const node = document.createElementNS(NS, name);
  for (const key in attrs) node.setAttribute(key, attrs[key]);
  if (text !== undefined) node.textContent = text;
  parent.appendChild(node);
  return node;
}

const PX_PER_UNIT = 0.627;
const LABEL_ROOM = 20;

function drawHorizontal() {
  const box = document.querySelector(".horizontal");
  box.replaceChildren();
  const svg = make(box, "svg", {});
  const origin = Math.round((box.clientWidth - 8) / 2);
  for (let u = -1500; u <= 1500; u += 5) {
    const x = Math.round(origin + u * PX_PER_UNIT) + 0.5;
    if (x < 0 || x > box.clientWidth) continue;
    const major = u % 50 === 0;
    make(svg, "path", { d: `M${x} ${major ? 0 : u % 25 === 0 ? 8 : 10}V14`, stroke: major ? "#999" : "#aaa" });
    if (major && x + LABEL_ROOM < box.clientWidth) make(svg, "text", { x: x + 3, y: 8 }, u);
  }
}

function drawVertical() {
  const box = document.querySelector(".vertical");
  box.replaceChildren();
  const svg = make(box, "svg", {});
  const origin = Math.round(box.clientHeight / 2) - 1;
  for (let u = -1000; u <= 1000; u += 5) {
    const y = Math.round(origin - u * PX_PER_UNIT) + 0.5;
    if (y < 0 || y > box.clientHeight) continue;
    const major = u % 50 === 0;
    make(svg, "path", { d: `M${major ? 0 : u % 25 === 0 ? 6 : 8} ${y}H12`, stroke: major ? "#999" : "#aaa" });
    if (major && y > 14) make(svg, "text", { transform: `translate(6 ${y - 1}) rotate(-90)` }, u);
  }
}

function drawTimeline() {
  const box = document.querySelector(".timeline");
  box.replaceChildren();
  const svg = make(box, "svg", {});
  for (let f = 0; f < 480; f += 3) {
    const x = Math.round(f * 4.89) + 0.5;
    if (x > box.clientWidth) break;
    const major = f % 24 === 0;
    make(svg, "path", { d: `M${x} 7V${major ? 15 : 9}`, stroke: f ? "#333" : "#e8a81c" });
    if (major && x + LABEL_ROOM < box.clientWidth) make(svg, "text", { x: x + 1, y: 15 }, f + "f");
  }
  make(svg, "path", { d: "M0 1H4L0 6Z", fill: "#000" });
}

function draw() {
  drawHorizontal();
  drawVertical();
  drawTimeline();
}

draw();
window.addEventListener("resize", draw);
```
